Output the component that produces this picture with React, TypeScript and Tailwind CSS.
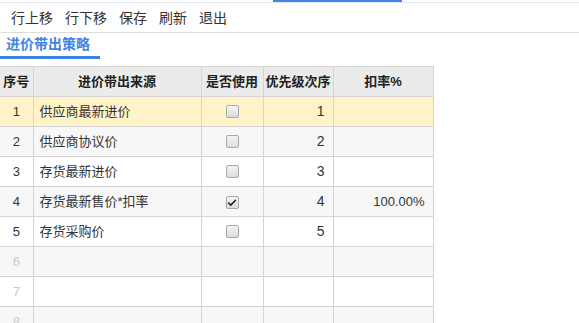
import { Check } from "lucide-react";

const rows = [
  { no: 1, source: "供应商最新进价", used: false, order: "1", rate: "" },
  { no: 2, source: "供应商协议价", used: false, order: "2", rate: "" },
  { no: 3, source: "存货最新进价", used: false, order: "3", rate: "" },
  { no: 4, source: "存货最新售价*扣率", used: true, order: "4", rate: "100.00%" },
  { no: 5, source: "存货采购价", used: false, order: "5", rate: "" },
  { no: 6, source: "", used: null, order: "", rate: "" },
  { no: 7, source: "", used: null, order: "", rate: "" },
  { no: 8, source: "", used: null, order: "", rate: "" },
];

function Box({ checked }: { checked: boolean }) {
  return (
    <span className="inline-flex h-[13px] w-[13px] items-center justify-center rounded-[2px] border border-[#a9a9a9] bg-gradient-to-b from-[#f4f4f4] to-[#dcdcdc]">
      {checked && <Check className="h-[10px] w-[10px] text-[#222]" strokeWidth={4} />}
    </span>
  );
}

export default function App() {
  const cell = "border-r border-b border-[#d4d4d4] h-[30px] p-0";
  return (
    <div className="relative h-[323px] w-[579px] overflow-hidden bg-white text-[#333] font-['Liberation_Sans','Noto_Sans_CJK_SC',sans-serif]">
      {/* top strip */}
      <div className="flex h-[3px] border-b border-[#e3e6ef]">
        <div className="ml-[273px] h-[2px] w-[129px] bg-[#3d84e6]" />
      </div>

      {/* toolbar */}
      <div className="flex h-[30px] items-center gap-[12px] border-b border-[#dcdcdc] pl-[11px] text-[14px] leading-none text-[#333]">
        <span>行上移</span>
        <span>行下移</span>
        <span>保存</span>
        <span>刷新</span>
        <span>退出</span>
      </div>

      {/* tab */}
      <div className="flex h-[26px] items-end">
        <div className="flex h-[25px] w-[100px] flex-col border-b-[3px] border-[#3d84e6] pl-[6px] pt-[1px] text-[14px] font-bold leading-[18px] text-[#3d84e6]">
          进价带出策略
        </div>
      </div>

      {/* table */}
      <table className="mt-[7px] w-[433px] table-fixed border-collapse border-t border-[#d4d4d4] text-[13px]">
        <colgroup>
          <col className="w-[33px]" />
          <col className="w-[168px]" />
          <col className="w-[62px]" />
          <col className="w-[70px]" />
          <col className="w-[100px]" />
        </colgroup>
        <thead>
          <tr className="bg-[#ebebeb] font-bold text-[#222]">
            <th className={cell + " text-center"}>序号</th>
            <th className={cell + " text-center"}>进价带出来源</th>
            <th className={cell + " text-center"}>是否使用</th>
            <th className={cell + " text-center"}>优先级次序</th>
            <th className={cell + " text-center"}>扣率%</th>
          </tr>
        </thead>
        <tbody>
          {rows.map((r, i) => (
            <tr
              key={r.no}
              className={i === 0 ? "bg-[#fff4c8]" : i % 2 === 1 ? "bg-[#f7f7f7]" : "bg-white"}
            >
              <td className={cell + " text-center " + (r.source ? "text-[#333]" : "text-[#c8c8c8]")}>
                {r.no}
              </td>
              <td className={cell + " pl-[6px]"}>{r.source}</td>
              <td className={cell + " text-center"}>
                {r.used !== null && (
                  <span className="inline-flex translate-y-[2px]">
                    <Box checked={r.used} />
                  </span>
                )}
              </td>
              <td className={cell + " pr-[8px] text-right text-[14px]"}>{r.order}</td>
              <td className={cell + " pr-[8px] text-right"}>{r.rate}</td>
            </tr>
          ))}
        </tbody>
      </table>
    </div>
  );
}
